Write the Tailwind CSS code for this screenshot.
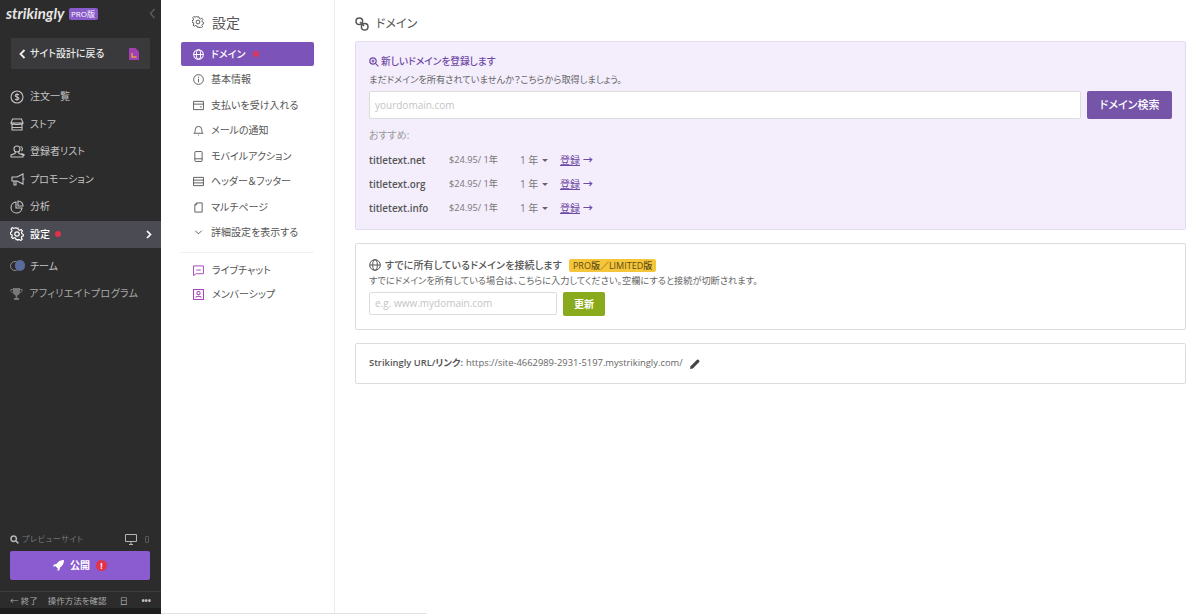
<!DOCTYPE html>
<html lang="ja">
<head>
<meta charset="UTF-8">
<title>Strikingly - 設定</title>
<script src="https://cdn.jsdelivr.net/npm/@tailwindcss/browser@4"></script>
</head>
<body class="bg-white font-['Open_Sans','Noto_Sans_CJK_JP',sans-serif] [font-feature-settings:'palt'] overflow-hidden">
<div class="flex w-[1200px] h-[614px] overflow-hidden">

  <!-- Left dark sidebar -->
  <aside class="w-[161px] h-full shrink-0 bg-[#2c2c2c] flex flex-col text-[#c4c4c6] text-[10px]">
    <div class="h-[25px] pl-[6px] pr-[5px] pt-[2px] flex items-center">
      <span class="font-['Lato'] italic font-bold text-[15px] leading-none text-[#e6e6e6] w-[57px]">strikingly</span>
      <span class="ml-[6px] px-[2px] w-[29px] h-[12px] leading-[12px] rounded-[2px] bg-[#8a5cc9] text-white text-[8px] whitespace-nowrap">PRO版</span>
      <svg class="ml-auto" width="7" height="11" viewBox="0 0 7 11" fill="none" stroke="#5c5c5e" stroke-width="1.4"><path d="M5.5 1 1.500 5.500 5.500 10"/></svg>
    </div>
    <div class="mx-[11px] mt-[13px] h-[31px] bg-[#3a3a3c] flex items-center pl-[8px] pr-[11px] text-[#e8e8e8] font-medium">
      <svg width="7" height="10" viewBox="0 0 7 10" fill="none" stroke="#eee" stroke-width="1.8"><path d="M5.500 1 1.500 5l4 4"/></svg>
      <span class="ml-[4px]">サイト設計に戻る</span>
      <svg class="ml-auto" width="10" height="12" viewBox="0 0 10 12"><path d="M0 0h6.500L10 3.500V12H0z" fill="#a23fb5"/><path d="M3 5v4h4.500" fill="none" stroke="#e8a33d" stroke-width="1.4"/></svg>
    </div>

    <nav class="mt-[14px] flex flex-col">
      <a class="h-[27.5px] pl-[10px] flex items-center gap-[6px]">
        <svg width="14" height="14" viewBox="0 0 14 14" fill="none" stroke="#c4c4c6" stroke-width="1.1"><circle cx="7" cy="7" r="6"/><path d="M9 5c-.5-1-3.800-1.200-3.800.7C5.200 7.500 9 6.500 9 8.400c0 1.800-3.500 1.600-4 .5M7 3.200v7.600"/></svg>
        <span>注文一覧</span>
      </a>
      <a class="h-[27.5px] pl-[10px] flex items-center gap-[6px]">
        <svg width="14" height="13" viewBox="0 0 14 13" fill="none" stroke="#c4c4c6" stroke-width="1.1"><path d="M2.500 1h9L13 5H1zM1 5c0 1.500 2 1.800 3 .8M13 5c0 1.500-2 1.800-3 .8M4 5.800c1 1 5 1 6 0M2 6.500V12h10V6.500M2 9.500h10"/></svg>
        <span>ストア</span>
      </a>
      <a class="h-[27.5px] pl-[10px] flex items-center gap-[5px]">
        <svg width="15" height="13" viewBox="0 0 15 13" fill="none" stroke="#c4c4c6" stroke-width="1.1"><circle cx="7" cy="4" r="3"/><path d="M5.500 6.500 5 8.500 1 10v2h12v-2L9 8.500l-.5-2M10.500 1.500c2 .2 2.500 3 1 4.500M11.500 8.500l2.500 1.200V11"/></svg>
        <span>登録者リスト</span>
      </a>
      <a class="h-[27.5px] pl-[10px] flex items-center gap-[5px]">
        <svg width="15" height="13" viewBox="0 0 15 13" fill="none" stroke="#c4c4c6" stroke-width="1.1"><path d="M13 1v10L7 8H2V4h5zM4 8v4h2V8M13 6h1.500"/></svg>
        <span>プロモーション</span>
      </a>
      <a class="h-[27.5px] pl-[10px] flex items-center gap-[6px]">
        <svg width="14" height="14" viewBox="0 0 14 14" fill="none" stroke="#c4c4c6" stroke-width="1.1"><path d="M6 2a5.500 5.500 0 1 0 6 6H6z"/><path d="M8 1a5 5 0 0 1 5 5H8z"/></svg>
        <span>分析</span>
      </a>
      <a class="h-[27px] pl-[10px] pr-[9px] flex items-center gap-[6px] bg-[#4a4b53] text-white font-medium">
        <svg width="14" height="14" viewBox="0 0 14 14" fill="none" stroke="#fff" stroke-width="1.200"><circle cx="7" cy="7" r="2.200"/><path d="M6 1h2l.4 1.700 1.500.7 1.500-.9 1.300 1.500-1 1.400.4 1.600 1.400.5v1.800l-1.500.5-.5 1.500.9 1.300-1.400 1.300-1.500-.9-1.500.6L8 13H6l-.4-1.400-1.500-.6-1.500.9-1.400-1.300.9-1.300-.5-1.500L0 7.300V5.500l1.400-.5.4-1.600-1-1.400 1.300-1.500 1.500.9 1.500-.7z" transform="translate(.3 .1) scale(.96)"/></svg>
        <span>設定</span>
        <span class="w-[6px] h-[6px] rounded-full bg-[#e5324b] ml-[-1px]"></span>
        <svg class="ml-auto" width="6" height="9" viewBox="0 0 6 9" fill="none" stroke="#fff" stroke-width="1.700"><path d="m1 1 3.500 3.500L1 8"/></svg>
      </a>
      <a class="h-[27px] mt-[5px] pl-[10px] flex items-center gap-[5px]">
        <span class="relative w-[15px] h-[12px] block">
          <span class="absolute left-0 top-[1px] w-[10px] h-[10px] rounded-full border border-[#8a8a8a]"></span>
          <span class="absolute right-0 top-0 w-[10px] h-[11px] rounded-full bg-[#5a6a9c]"></span>
        </span>
        <span>チーム</span>
      </a>
      <a class="h-[27px] mt-[0.5px] pl-[10px] flex items-center gap-[6px] text-[#a9a9ab]">
        <svg width="13" height="12" viewBox="0 0 13 12"><path d="M3 0h7v4c0 2-1.500 3.200-2.700 3.500V10H9v2H4v-2h1.700V7.500C4.500 7.200 3 6 3 4z" fill="#77777a"/><path d="M3 1.500H.8c0 2 1 3 2.500 3.300M10 1.500h2.200c0 2-1 3-2.500 3.300" fill="none" stroke="#77777a"/></svg>
        <span class="tracking-[0.35px]">アフィリエイトプログラム</span>
      </a>
    </nav>

    <div class="mt-auto">
      <div class="h-[16px] pl-[10px] pr-[12px] flex items-center text-[#77777a] text-[8px]">
        <svg width="9" height="9" viewBox="0 0 9 9" fill="none" stroke="#b5b5b7" stroke-width="1.500"><circle cx="3.700" cy="3.700" r="2.700"/><path d="m5.800 5.800 2.600 2.600"/></svg>
        <span class="ml-[3px] tracking-[0.6px]">プレビューサイト</span>
        <svg class="ml-auto" width="12" height="11" viewBox="0 0 12 11"><path d="M.5.500h11v7H.500z" fill="none" stroke="#b5b5b7"/><path d="M4 10.500h4M6 8v2" stroke="#b5b5b7"/></svg>
        <span class="ml-[8px] w-[4px] h-[7px] border border-[#5a5a5c] rounded-[1px]"></span>
      </div>
      <button class="mx-[10px] mt-[4px] w-[140px] h-[29px] rounded-[2px] bg-[#8b5cd0] flex items-center justify-center text-white font-bold">
        <svg width="11" height="11" viewBox="0 0 11 11"><path d="M11 0C7.500 0 5 1.500 3.500 4L1 4.500 0 6.500l2.500-.3 2.300 2.300L4.500 11l2-1 .5-2.500C9.500 6 11 3.500 11 0z" fill="#fff"/></svg>
        <span class="ml-[6px]">公開</span>
        <span class="ml-[6px] w-[11px] h-[11px] rounded-full bg-[#e5324b] text-[8px] leading-[11px] text-center">!</span>
      </button>
      <div class="mt-[11px] h-[18px] border-t border-[#3c3c3e] pt-[1px] pl-[10px] pr-[10px] flex items-center text-[#a9a9ab] text-[8.500px]">
        <span>← 終了</span>
        <span class="ml-[10px]">操作方法を確認</span>
        <span class="ml-[13px]">日</span>
        <span class="ml-auto font-bold text-[#c4c4c6] leading-none">•••</span>
      </div>
      <div class="h-[6px] mt-[-1px] bg-[#1e1e1e]"></div>
    </div>
  </aside>

  <!-- Settings nav -->
  <div class="w-[174px] h-full shrink-0 border-r border-[#ececec] text-[#555] text-[10px] pt-[12px] relative">
    <div class="h-[20px] pl-[31px] flex items-center gap-[8px] text-[#555]">
      <svg width="12" height="12" viewBox="0 0 14 14" fill="none" stroke="#555" stroke-width="1.100"><circle cx="7" cy="7" r="2.200"/><path d="M6 1h2l.4 1.700 1.500.7 1.500-.9 1.300 1.500-1 1.400.4 1.600 1.400.5v1.800l-1.500.5-.5 1.500.9 1.300-1.400 1.300-1.500-.9-1.500.6L8 13H6l-.4-1.400-1.500-.6-1.500.9-1.400-1.300.9-1.300-.5-1.500L0 7.300V5.500l1.400-.5.4-1.600-1-1.400 1.300-1.500 1.500.9 1.500-.7z"/></svg>
      <span class="text-[14px]">設定</span>
    </div>
    <div class="mt-[10px] ml-[20px] mr-[20px] flex flex-col">
      <a class="h-[24px] rounded-[2px] bg-[#7c53b8] text-white font-medium pl-[12px] flex items-center gap-[7px]">
        <svg width="11" height="11" viewBox="0 0 12 12" fill="none" stroke="#fff" stroke-width="1.100"><circle cx="6" cy="6" r="5.300"/><ellipse cx="6" cy="6" rx="2.300" ry="5.300"/><path d="M.7 6h10.600"/></svg>
        <span>ドメイン</span>
        <span class="w-[6px] h-[6px] rounded-full bg-[#d9395f] ml-[1px]"></span>
      </a>
      <a class="h-[25.500px] mt-[1px] pl-[12px] flex items-center gap-[7px]">
        <svg width="11" height="11" viewBox="0 0 12 12" fill="none" stroke="#555" stroke-width="1"><circle cx="6" cy="6" r="5.300"/><path d="M6 5.200V9M6 3v1.200"/></svg>
        <span>基本情報</span>
      </a>
      <a class="h-[25.500px] pl-[12px] flex items-center gap-[7px]">
        <svg width="11" height="11" viewBox="0 0 12 12" fill="none" stroke="#555" stroke-width="1"><path d="M.6 1.500h10.800v9H.600zM.6 4.500h10.800M7.500 7.500h2"/></svg>
        <span>支払いを受け入れる</span>
      </a>
      <a class="h-[25.500px] pl-[12px] flex items-center gap-[7px]">
        <svg width="11" height="11" viewBox="0 0 12 12" fill="none" stroke="#555" stroke-width="1"><path d="M1 9c1.200-1 1.500-2 1.500-4a3.500 3.500 0 0 1 7 0c0 2 .3 3 1.500 4zM5.500 11h1"/></svg>
        <span>メールの通知</span>
      </a>
      <a class="h-[25.500px] pl-[12px] flex items-center gap-[7px]">
        <svg width="11" height="11" viewBox="0 0 12 12" fill="none" stroke="#555" stroke-width="1"><rect x="2" y=".6" width="8" height="10.800" rx="1"/><path d="M2 8.500h8" /></svg>
        <span>モバイルアクション</span>
      </a>
      <a class="h-[25.500px] pl-[12px] flex items-center gap-[7px]">
        <svg width="11" height="11" viewBox="0 0 12 12" fill="none" stroke="#555" stroke-width="1"><path d="M.6 1.500h10.800v9H.600zM.6 4.500h10.800M.6 7.500h10.800"/></svg>
        <span>ヘッダー＆フッター</span>
      </a>
      <a class="h-[25.500px] pl-[12px] flex items-center gap-[7px]">
        <svg width="11" height="11" viewBox="0 0 12 12" fill="none" stroke="#555" stroke-width="1"><path d="M4 1h6v10H2V3zM4 1v2H2"/></svg>
        <span>マルチページ</span>
      </a>
      <a class="h-[25.500px] pl-[12px] flex items-center gap-[7px]">
        <svg width="11" height="11" viewBox="0 0 12 12" fill="none" stroke="#555" stroke-width="1"><path d="m2.500 4 3.500 3.500L9.500 4"/></svg>
        <span>詳細設定を表示する</span>
      </a>
      <div class="mt-[6px] border-t border-[#f0f0f0]"></div>
      <a class="h-[24px] mt-[6px] pl-[12px] flex items-center gap-[8px]">
        <svg width="11" height="11" viewBox="0 0 12 12" fill="none" stroke="#a23fb5" stroke-width="1"><path d="M.6 1h10.800v8.500H3.500L.6 11.500zM3.500 5.500h5"/></svg>
        <span>ライブチャット</span>
      </a>
      <a class="h-[24px] pl-[12px] flex items-center gap-[8px]">
        <svg width="11" height="11" viewBox="0 0 12 12" fill="none" stroke="#a23fb5" stroke-width="1.100"><rect x=".6" y=".6" width="10.800" height="10.800"/><circle cx="6" cy="4.500" r="1.800"/><path d="M2.800 9.500c.5-2 5.900-2 6.400 0"/></svg>
        <span>メンバーシップ</span>
      </a>
    </div>
  </div>

  <!-- Main content -->
  <main class="flex-1 pl-[20px] pr-[14px] pt-[15px] text-[#666] text-[10px]">
    <div class="h-[18px] flex items-center gap-[7px] text-[#555]">
      <svg width="14" height="14" viewBox="0 0 14 14" fill="none" stroke="#555" stroke-width="1.500"><circle cx="4.300" cy="4.300" r="3.300"/><circle cx="9.700" cy="9.700" r="3.300"/><path d="m5 5 4 4"/></svg>
      <span class="text-[12px]">ドメイン</span>
    </div>

    <section class="mt-[8px] h-[189px] bg-[#f3edfc] border border-[#e3dcef] rounded-[2px] px-[13px] pt-[13px]">
      <div class="flex items-center gap-[2px] h-[14px] text-[#6f4aa5] font-medium text-[9.700px]">
        <svg width="10" height="10" viewBox="0 0 10 10" fill="none" stroke="#6f4aa5" stroke-width="1.200"><circle cx="4" cy="4" r="3.200"/><path d="m6.400 6.400 3 3M2.500 4h3M4 2.500v3"/></svg>
        <span>新しいドメインを登録します</span>
      </div>
      <p class="mt-[4px] h-[14px] leading-[14px] text-[9.200px]">まだドメインを所有されていませんか？こちらから取得しましょう。</p>
      <div class="mt-[4px] flex gap-[6px]">
        <div class="flex-1 h-[28px] bg-white border border-[#dcdcdc] rounded-[2px] pl-[5px] flex items-center text-[#c4c4c4]">yourdomain.com</div>
        <button class="w-[85px] h-[28px] rounded-[2px] bg-[#7654a8] text-white font-medium text-[11px]">ドメイン検索</button>
      </div>
      <p class="mt-[9px] h-[14px] leading-[14px] text-[#999]">おすすめ:</p>
      <div class="mt-[6px] flex flex-col">
        <div class="h-[24px] flex items-center">
          <b class="w-[80px] font-semibold text-[9.900px] text-[#555]">titletext.net</b>
          <span class="w-[71px] text-[9.200px] text-[#777]">$24.95/ 1年</span>
          <span class="w-[40px] text-[#777] flex items-center gap-[4px]">1 年 <i class="w-0 h-0 border-x-[3px] border-x-transparent border-t-[3px] border-t-[#666]"></i></span>
          <a class="text-[#6f4aa5] underline">登録</a><span class="ml-[3px] text-[#6f4aa5] font-bold">→</span>
        </div>
        <div class="h-[24px] flex items-center">
          <b class="w-[80px] font-semibold text-[9.900px] text-[#555]">titletext.org</b>
          <span class="w-[71px] text-[9.200px] text-[#777]">$24.95/ 1年</span>
          <span class="w-[40px] text-[#777] flex items-center gap-[4px]">1 年 <i class="w-0 h-0 border-x-[3px] border-x-transparent border-t-[3px] border-t-[#666]"></i></span>
          <a class="text-[#6f4aa5] underline">登録</a><span class="ml-[3px] text-[#6f4aa5] font-bold">→</span>
        </div>
        <div class="h-[24px] flex items-center">
          <b class="w-[80px] font-semibold text-[9.900px] text-[#555]">titletext.info</b>
          <span class="w-[71px] text-[9.200px] text-[#777]">$24.95/ 1年</span>
          <span class="w-[40px] text-[#777] flex items-center gap-[4px]">1 年 <i class="w-0 h-0 border-x-[3px] border-x-transparent border-t-[3px] border-t-[#666]"></i></span>
          <a class="text-[#6f4aa5] underline">登録</a><span class="ml-[3px] text-[#6f4aa5] font-bold">→</span>
        </div>
      </div>
    </section>

    <section class="mt-[13px] h-[87px] bg-white border border-[#dcdcdc] rounded-[2px] px-[13px] pt-[13px]">
      <div class="flex items-center h-[16px] text-[#555] font-medium">
        <svg width="12" height="12" viewBox="0 0 12 12" fill="none" stroke="#555" stroke-width="1"><circle cx="6" cy="6" r="5.300"/><ellipse cx="6" cy="6" rx="2.300" ry="5.300"/><path d="M.7 6h10.600"/></svg>
        <span class="ml-[4px] tracking-[0.15px]">すでに所有しているドメインを接続します</span>
        <span class="ml-[7px] px-[4px] h-[13px] leading-[13px] rounded-[2px] bg-[#f5c53a] text-[#5c4a12] text-[9px] whitespace-nowrap">PRO版／LIMITED版</span>
      </div>
      <p class="mt-[1px] h-[14px] leading-[14px] text-[9.200px]">すでにドメインを所有している場合は、こちらに入力してください。空欄にすると接続が切断されます。</p>
      <div class="mt-[4px] flex gap-[6px]">
        <div class="w-[188px] h-[23px] border border-[#dcdcdc] rounded-[2px] pl-[5px] flex items-center text-[#c4c4c4]">e.g. www.mydomain.com</div>
        <button class="w-[42px] h-[24px] rounded-[2px] bg-[#8aaa1e] text-white font-bold">更新</button>
      </div>
    </section>

    <section class="mt-[13px] h-[41px] bg-white border border-[#dcdcdc] rounded-[2px] px-[13px] flex items-center text-[9.400px]">
      <b class="font-semibold text-[#555]">Strikingly URL/リンク:</b>
      <span class="ml-[3px] text-[#666]">https://site-4662989-2931-5197.mystrikingly.com/</span>
      <svg class="ml-[7px]" width="10" height="10" viewBox="0 0 10 10"><path d="M0 10l.6-2.800L7 .8a1 1 0 0 1 1.400 0l.8.8a1 1 0 0 1 0 1.400L2.800 9.400z" fill="#444"/></svg>
    </section>
  </main>
</div>
<div class="absolute left-[161px] top-[613px] w-[266px] h-[1px] bg-[#e2e2e2]"></div>
</body>
</html>
